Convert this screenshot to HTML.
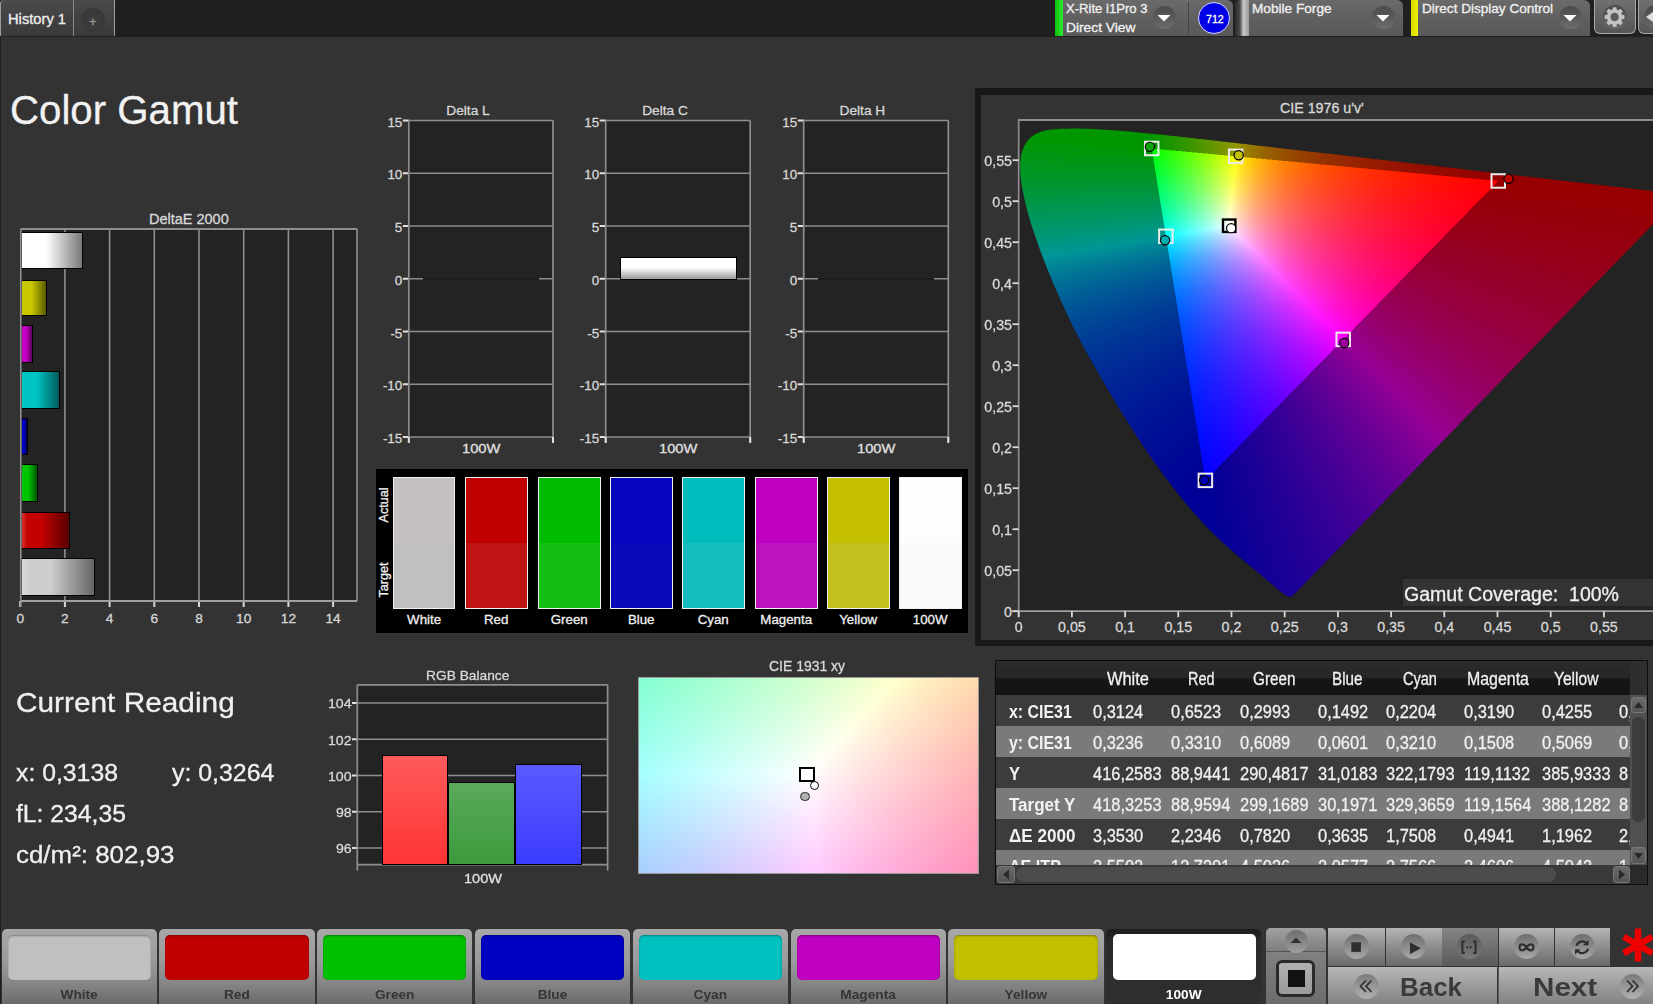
<!DOCTYPE html><html><head><meta charset="utf-8"><style>
html,body{margin:0;padding:0;}
body{width:1653px;height:1004px;overflow:hidden;background:#333333;position:relative;font-family:"Liberation Sans",sans-serif;}
.a{position:absolute;box-sizing:border-box;}
.t{position:absolute;white-space:pre;transform-origin:0 0;-webkit-text-stroke:0.3px currentColor;}
svg{position:absolute;left:0;top:0;}
canvas{position:absolute;}
</style></head><body>
<div class="a" style="left:0.00px;top:0.00px;width:1653.00px;height:37.00px;background:#202020;"></div>
<div class="a" style="left:0.00px;top:0.00px;width:115.00px;height:36.00px;background:linear-gradient(#4a4a4a,#3a3a3a);border-left:1px solid #9a9a9a;border-right:1px solid #a0a0a0;border-top-left-radius:4px;"></div>
<div class="a" style="left:73.00px;top:0.00px;width:1.00px;height:36.00px;background:#8a8a8a;"></div>
<div class="t" style="left:8.00px;top:12.68px;font-size:13.97px;line-height:13.97px;color:#eeeeee;transform:scaleX(1.0526);">History 1</div>
<div class="a" style="left:81px;top:8px;width:24px;height:24px;border-radius:50%;background:radial-gradient(circle at 50% 60%,#3e3e3e,#353535);"></div>
<div class="t" style="left:89.00px;top:14.50px;font-size:13.00px;line-height:13.00px;color:#999999;">+</div>
<div class="a" style="left:1055.00px;top:0.00px;width:178.00px;height:36.00px;background:linear-gradient(#6a6a6a,#5e5e5e 60%,#595959);border-top-right-radius:6px;"></div>
<div class="a" style="left:1055.00px;top:0.00px;width:8.00px;height:36.00px;background:linear-gradient(90deg,#10c010,#30e830);"></div>
<div class="a" style="left:1188.00px;top:2.00px;width:1.00px;height:34.00px;background:#454545;"></div>
<div class="t" style="left:1066.20px;top:2.83px;font-size:12.01px;line-height:12.01px;color:#f0f0f0;transform:scaleX(1.0915);">X-Rite i1Pro 3</div>
<div class="t" style="left:1066.20px;top:22.13px;font-size:12.01px;line-height:12.01px;color:#f0f0f0;transform:scaleX(1.1484);">Direct View</div>
<div class="a" style="left:1152.7px;top:5.5px;width:23px;height:23px;border-radius:50%;background:linear-gradient(#4c4c4c,#5a5a5a 50%,#6e6e6e);"></div>
<svg style="left:1157.2px;top:14.2px" width="14" height="9"><path d="M0.5 1 L13.5 1 L7 7.6 Z" fill="#ffffff"/></svg>
<div class="a" style="left:1198px;top:1.5px;width:32px;height:32px;border-radius:50%;background:#0000e6;border:1.5px solid #d8d8ff;"></div>
<div class="t" style="left:1205.80px;top:13.91px;font-size:10.61px;line-height:10.61px;color:#ffffff;transform:scaleX(1.0052);">712</div>
<div class="a" style="left:1239.00px;top:0.00px;width:164.00px;height:36.00px;background:linear-gradient(#6a6a6a,#5e5e5e 60%,#595959);border-top-right-radius:6px;"></div>
<div class="a" style="left:1235.00px;top:0.00px;width:14.00px;height:36.00px;background:linear-gradient(90deg,#2a2a2a,#4a4a4a 35%,#c8c8c8 60%,#9a9a9a);border-top-left-radius:5px;"></div>
<div class="t" style="left:1252.00px;top:2.60px;font-size:12.29px;line-height:12.29px;color:#f0f0f0;transform:scaleX(1.1099);">Mobile Forge</div>
<div class="a" style="left:1371.7px;top:5.5px;width:23px;height:23px;border-radius:50%;background:linear-gradient(#4c4c4c,#5a5a5a 50%,#6e6e6e);"></div>
<svg style="left:1376.2px;top:14.2px" width="14" height="9"><path d="M0.5 1 L13.5 1 L7 7.6 Z" fill="#ffffff"/></svg>
<div class="a" style="left:1411.00px;top:0.00px;width:179.00px;height:36.00px;background:linear-gradient(#6a6a6a,#5e5e5e 60%,#595959);border-top-right-radius:6px;"></div>
<div class="a" style="left:1411.00px;top:0.00px;width:7.00px;height:36.00px;background:linear-gradient(90deg,#d8d800,#f0f000);"></div>
<div class="t" style="left:1422.40px;top:2.60px;font-size:12.29px;line-height:12.29px;color:#f0f0f0;transform:scaleX(1.1040);">Direct Display Control</div>
<div class="a" style="left:1558.5px;top:5.5px;width:23px;height:23px;border-radius:50%;background:linear-gradient(#4c4c4c,#5a5a5a 50%,#6e6e6e);"></div>
<svg style="left:1563.0px;top:14.2px" width="14" height="9"><path d="M0.5 1 L13.5 1 L7 7.6 Z" fill="#ffffff"/></svg>
<div class="a" style="left:1594px;top:0px;width:42px;height:34px;border-radius:0 0 6px 6px;border:1px solid #a8a8a8;border-top:none;background:linear-gradient(#707070,#555555);"></div>
<div class="a" style="left:1603px;top:5px;width:24px;height:24px;border-radius:50%;background:linear-gradient(#4a4a4a,#6a6a6a);"></div>
<svg style="left:1594px;top:0px" width="42" height="36"><path d="M27.86 14.75 L30.46 15.31 L30.46 18.69 L27.86 19.25 L27.32 20.55 L28.77 22.77 L26.37 25.17 L24.15 23.72 L22.85 24.26 L22.29 26.86 L18.91 26.86 L18.35 24.26 L17.05 23.72 L14.83 25.17 L12.43 22.77 L13.88 20.55 L13.34 19.25 L10.74 18.69 L10.74 15.31 L13.34 14.75 L13.88 13.45 L12.43 11.23 L14.83 8.83 L17.05 10.28 L18.35 9.74 L18.91 7.14 L22.29 7.14 L22.85 9.74 L24.15 10.28 L26.37 8.83 L28.77 11.23 L27.32 13.45 Z" fill="#c4c4c4"/><circle cx="20.60" cy="17" r="4.2" fill="#5a5a5a"/></svg>
<div class="a" style="left:1638px;top:0px;width:30px;height:34px;border-radius:0 0 6px 6px;border:1px solid #a8a8a8;border-top:none;background:linear-gradient(#707070,#555555);"></div>
<div class="a" style="left:1644px;top:5px;width:24px;height:24px;border-radius:50%;background:linear-gradient(#4a4a4a,#6a6a6a);"></div>
<svg style="left:1644px;top:0px" width="9" height="36"><path d="M2 17 L9 12 L9 22 Z" fill="#e0e0e0"/></svg>
<div class="a" style="left:0.00px;top:37.00px;width:1.20px;height:967.00px;background:#1e1e1e;"></div>
<div class="t" style="left:9.50px;top:91.31px;font-size:39.80px;line-height:39.80px;color:#f2f2f2;transform:scaleX(1.0106);">Color Gamut</div>
<div class="a" style="left:20.50px;top:229.00px;width:336.50px;height:372.00px;background:#232323;"></div>
<div class="t" style="left:148.75px;top:213.18px;font-size:13.97px;line-height:13.97px;color:#d8d8d8;transform:scaleX(1.0369);">DeltaE 2000</div>
<div class="t" style="left:16.39px;top:612.41px;font-size:13.69px;line-height:13.69px;color:#d8d8d8;">0</div>
<div class="t" style="left:61.09px;top:612.41px;font-size:13.69px;line-height:13.69px;color:#d8d8d8;">2</div>
<div class="t" style="left:105.79px;top:612.41px;font-size:13.69px;line-height:13.69px;color:#d8d8d8;">4</div>
<div class="t" style="left:150.49px;top:612.41px;font-size:13.69px;line-height:13.69px;color:#d8d8d8;">6</div>
<div class="t" style="left:195.19px;top:612.41px;font-size:13.69px;line-height:13.69px;color:#d8d8d8;">8</div>
<div class="t" style="left:236.09px;top:612.41px;font-size:13.69px;line-height:13.69px;color:#d8d8d8;">10</div>
<div class="t" style="left:280.79px;top:612.41px;font-size:13.69px;line-height:13.69px;color:#d8d8d8;">12</div>
<div class="t" style="left:325.49px;top:612.41px;font-size:13.69px;line-height:13.69px;color:#d8d8d8;">14</div>
<svg width="1653" height="1004" style="left:0;top:0"><line x1="20.20" y1="601.00" x2="20.20" y2="607.00" stroke="#d8d8d8" stroke-width="2"/><line x1="64.90" y1="229.00" x2="64.90" y2="601.00" stroke="#8e8e8e" stroke-width="1.6"/><line x1="64.90" y1="601.00" x2="64.90" y2="607.00" stroke="#d8d8d8" stroke-width="2"/><line x1="109.60" y1="229.00" x2="109.60" y2="601.00" stroke="#8e8e8e" stroke-width="1.6"/><line x1="109.60" y1="601.00" x2="109.60" y2="607.00" stroke="#d8d8d8" stroke-width="2"/><line x1="154.30" y1="229.00" x2="154.30" y2="601.00" stroke="#8e8e8e" stroke-width="1.6"/><line x1="154.30" y1="601.00" x2="154.30" y2="607.00" stroke="#d8d8d8" stroke-width="2"/><line x1="199.00" y1="229.00" x2="199.00" y2="601.00" stroke="#8e8e8e" stroke-width="1.6"/><line x1="199.00" y1="601.00" x2="199.00" y2="607.00" stroke="#d8d8d8" stroke-width="2"/><line x1="243.70" y1="229.00" x2="243.70" y2="601.00" stroke="#8e8e8e" stroke-width="1.6"/><line x1="243.70" y1="601.00" x2="243.70" y2="607.00" stroke="#d8d8d8" stroke-width="2"/><line x1="288.40" y1="229.00" x2="288.40" y2="601.00" stroke="#8e8e8e" stroke-width="1.6"/><line x1="288.40" y1="601.00" x2="288.40" y2="607.00" stroke="#d8d8d8" stroke-width="2"/><line x1="333.10" y1="229.00" x2="333.10" y2="601.00" stroke="#8e8e8e" stroke-width="1.6"/><line x1="333.10" y1="601.00" x2="333.10" y2="607.00" stroke="#d8d8d8" stroke-width="2"/><line x1="357.00" y1="229.00" x2="357.00" y2="601.00" stroke="#8e8e8e" stroke-width="1.6"/><line x1="20.50" y1="229.00" x2="357.00" y2="229.00" stroke="#8e8e8e" stroke-width="2"/><line x1="20.80" y1="229.00" x2="20.80" y2="607.00" stroke="#8e8e8e" stroke-width="1.6"/><line x1="20.50" y1="601.00" x2="357.00" y2="601.00" stroke="#a0a0a0" stroke-width="1.8"/></svg>
<div class="a" style="left:21.50px;top:231.60px;width:61.00px;height:37.00px;background:linear-gradient(90deg,#ffffff,#ffffff 12%,#ffffff 40%,#7a7a7a);border:1.5px solid #000;border-left:none;"></div>
<div class="a" style="left:21.50px;top:279.50px;width:25.50px;height:36.10px;background:linear-gradient(90deg,#c8c800,#c8c800 12%,#c8c800 40%,#5a5a00);border:1.5px solid #000;border-left:none;"></div>
<div class="a" style="left:21.50px;top:325.00px;width:11.00px;height:37.60px;background:linear-gradient(90deg,#c400c4,#c400c4 12%,#c400c4 40%,#5a005a);border:1.5px solid #000;border-left:none;"></div>
<div class="a" style="left:21.50px;top:371.40px;width:38.10px;height:37.20px;background:linear-gradient(90deg,#00c4c4,#00c4c4 12%,#00c4c4 40%,#005a5a);border:1.5px solid #000;border-left:none;"></div>
<div class="a" style="left:21.50px;top:418.00px;width:6.30px;height:37.30px;background:linear-gradient(90deg,#0000c4,#0000c4 12%,#0000c4 40%,#00005a);border:1.5px solid #000;border-left:none;"></div>
<div class="a" style="left:21.50px;top:464.00px;width:16.10px;height:37.60px;background:linear-gradient(90deg,#00c400,#00c400 12%,#00c400 40%,#005a00);border:1.5px solid #000;border-left:none;"></div>
<div class="a" style="left:21.50px;top:511.60px;width:48.90px;height:37.00px;background:linear-gradient(90deg,#d83030,#c40000 12%,#c40000 40%,#5a0000);border:1.5px solid #000;border-left:none;"></div>
<div class="a" style="left:21.50px;top:558.30px;width:73.30px;height:37.30px;background:linear-gradient(90deg,#d8d8d8,#cdcdcd 12%,#cdcdcd 40%,#666666);border:1.5px solid #000;border-left:none;"></div>
<div class="a" style="left:408.80px;top:120.50px;width:144.20px;height:316.50px;background:#232323;"></div>
<div class="t" style="left:446.32px;top:104.41px;font-size:13.69px;line-height:13.69px;color:#d8d8d8;">Delta L</div>
<div class="t" style="left:387.39px;top:115.55px;font-size:13.41px;line-height:13.41px;color:#d8d8d8;">15</div>
<div class="t" style="left:387.39px;top:168.30px;font-size:13.41px;line-height:13.41px;color:#d8d8d8;">10</div>
<div class="t" style="left:394.84px;top:221.05px;font-size:13.41px;line-height:13.41px;color:#d8d8d8;">5</div>
<div class="t" style="left:394.84px;top:273.80px;font-size:13.41px;line-height:13.41px;color:#d8d8d8;">0</div>
<div class="t" style="left:390.38px;top:326.55px;font-size:13.41px;line-height:13.41px;color:#d8d8d8;">-5</div>
<div class="t" style="left:382.92px;top:379.30px;font-size:13.41px;line-height:13.41px;color:#d8d8d8;">-10</div>
<div class="t" style="left:382.92px;top:432.05px;font-size:13.41px;line-height:13.41px;color:#d8d8d8;">-15</div>
<svg width="1653" height="1004" style="left:0;top:0"><line x1="408.80" y1="120.50" x2="553.00" y2="120.50" stroke="#8e8e8e" stroke-width="1.7"/><line x1="402.80" y1="120.50" x2="408.80" y2="120.50" stroke="#e0e0e0" stroke-width="2"/><line x1="408.80" y1="173.25" x2="553.00" y2="173.25" stroke="#8e8e8e" stroke-width="1.7"/><line x1="402.80" y1="173.25" x2="408.80" y2="173.25" stroke="#e0e0e0" stroke-width="2"/><line x1="408.80" y1="226.00" x2="553.00" y2="226.00" stroke="#8e8e8e" stroke-width="1.7"/><line x1="402.80" y1="226.00" x2="408.80" y2="226.00" stroke="#e0e0e0" stroke-width="2"/><line x1="408.80" y1="278.75" x2="553.00" y2="278.75" stroke="#8e8e8e" stroke-width="1.7"/><line x1="402.80" y1="278.75" x2="408.80" y2="278.75" stroke="#e0e0e0" stroke-width="2"/><line x1="408.80" y1="331.50" x2="553.00" y2="331.50" stroke="#8e8e8e" stroke-width="1.7"/><line x1="402.80" y1="331.50" x2="408.80" y2="331.50" stroke="#e0e0e0" stroke-width="2"/><line x1="408.80" y1="384.25" x2="553.00" y2="384.25" stroke="#8e8e8e" stroke-width="1.7"/><line x1="402.80" y1="384.25" x2="408.80" y2="384.25" stroke="#e0e0e0" stroke-width="2"/><line x1="408.80" y1="437.00" x2="553.00" y2="437.00" stroke="#8e8e8e" stroke-width="1.7"/><line x1="402.80" y1="437.00" x2="408.80" y2="437.00" stroke="#e0e0e0" stroke-width="2"/><line x1="408.80" y1="120.50" x2="408.80" y2="443.00" stroke="#8e8e8e" stroke-width="1.7"/><line x1="553.00" y1="120.50" x2="553.00" y2="443.00" stroke="#8e8e8e" stroke-width="1.7"/><line x1="553.00" y1="437.00" x2="553.00" y2="443.00" stroke="#e0e0e0" stroke-width="2"/><line x1="408.80" y1="437.00" x2="408.80" y2="443.00" stroke="#e0e0e0" stroke-width="2"/></svg>
<div class="t" style="left:461.70px;top:442.37px;font-size:13.27px;line-height:13.27px;color:#e0e0e0;transform:scaleX(1.1079);">100W</div>
<div class="a" style="left:422.80px;top:278.00px;width:116.20px;height:2.00px;background:#1c1c1c;"></div>
<div class="a" style="left:605.70px;top:120.50px;width:144.50px;height:316.50px;background:#232323;"></div>
<div class="t" style="left:642.18px;top:104.41px;font-size:13.69px;line-height:13.69px;color:#d8d8d8;">Delta C</div>
<div class="t" style="left:584.29px;top:115.55px;font-size:13.41px;line-height:13.41px;color:#d8d8d8;">15</div>
<div class="t" style="left:584.29px;top:168.30px;font-size:13.41px;line-height:13.41px;color:#d8d8d8;">10</div>
<div class="t" style="left:591.74px;top:221.05px;font-size:13.41px;line-height:13.41px;color:#d8d8d8;">5</div>
<div class="t" style="left:591.74px;top:273.80px;font-size:13.41px;line-height:13.41px;color:#d8d8d8;">0</div>
<div class="t" style="left:587.28px;top:326.55px;font-size:13.41px;line-height:13.41px;color:#d8d8d8;">-5</div>
<div class="t" style="left:579.82px;top:379.30px;font-size:13.41px;line-height:13.41px;color:#d8d8d8;">-10</div>
<div class="t" style="left:579.82px;top:432.05px;font-size:13.41px;line-height:13.41px;color:#d8d8d8;">-15</div>
<svg width="1653" height="1004" style="left:0;top:0"><line x1="605.70" y1="120.50" x2="750.20" y2="120.50" stroke="#8e8e8e" stroke-width="1.7"/><line x1="599.70" y1="120.50" x2="605.70" y2="120.50" stroke="#e0e0e0" stroke-width="2"/><line x1="605.70" y1="173.25" x2="750.20" y2="173.25" stroke="#8e8e8e" stroke-width="1.7"/><line x1="599.70" y1="173.25" x2="605.70" y2="173.25" stroke="#e0e0e0" stroke-width="2"/><line x1="605.70" y1="226.00" x2="750.20" y2="226.00" stroke="#8e8e8e" stroke-width="1.7"/><line x1="599.70" y1="226.00" x2="605.70" y2="226.00" stroke="#e0e0e0" stroke-width="2"/><line x1="605.70" y1="278.75" x2="750.20" y2="278.75" stroke="#8e8e8e" stroke-width="1.7"/><line x1="599.70" y1="278.75" x2="605.70" y2="278.75" stroke="#e0e0e0" stroke-width="2"/><line x1="605.70" y1="331.50" x2="750.20" y2="331.50" stroke="#8e8e8e" stroke-width="1.7"/><line x1="599.70" y1="331.50" x2="605.70" y2="331.50" stroke="#e0e0e0" stroke-width="2"/><line x1="605.70" y1="384.25" x2="750.20" y2="384.25" stroke="#8e8e8e" stroke-width="1.7"/><line x1="599.70" y1="384.25" x2="605.70" y2="384.25" stroke="#e0e0e0" stroke-width="2"/><line x1="605.70" y1="437.00" x2="750.20" y2="437.00" stroke="#8e8e8e" stroke-width="1.7"/><line x1="599.70" y1="437.00" x2="605.70" y2="437.00" stroke="#e0e0e0" stroke-width="2"/><line x1="605.70" y1="120.50" x2="605.70" y2="443.00" stroke="#8e8e8e" stroke-width="1.7"/><line x1="750.20" y1="120.50" x2="750.20" y2="443.00" stroke="#8e8e8e" stroke-width="1.7"/><line x1="750.20" y1="437.00" x2="750.20" y2="443.00" stroke="#e0e0e0" stroke-width="2"/><line x1="605.70" y1="437.00" x2="605.70" y2="443.00" stroke="#e0e0e0" stroke-width="2"/></svg>
<div class="t" style="left:658.75px;top:442.37px;font-size:13.27px;line-height:13.27px;color:#e0e0e0;transform:scaleX(1.1079);">100W</div>
<div class="a" style="left:619.50px;top:256.50px;width:117.00px;height:23.70px;background:linear-gradient(#ffffff,#ffffff 45%,#9a9a9a);border:1.8px solid #000;"></div>
<div class="a" style="left:803.70px;top:120.50px;width:144.60px;height:316.50px;background:#232323;"></div>
<div class="t" style="left:839.58px;top:104.41px;font-size:13.69px;line-height:13.69px;color:#d8d8d8;">Delta H</div>
<div class="t" style="left:782.29px;top:115.55px;font-size:13.41px;line-height:13.41px;color:#d8d8d8;">15</div>
<div class="t" style="left:782.29px;top:168.30px;font-size:13.41px;line-height:13.41px;color:#d8d8d8;">10</div>
<div class="t" style="left:789.74px;top:221.05px;font-size:13.41px;line-height:13.41px;color:#d8d8d8;">5</div>
<div class="t" style="left:789.74px;top:273.80px;font-size:13.41px;line-height:13.41px;color:#d8d8d8;">0</div>
<div class="t" style="left:785.28px;top:326.55px;font-size:13.41px;line-height:13.41px;color:#d8d8d8;">-5</div>
<div class="t" style="left:777.82px;top:379.30px;font-size:13.41px;line-height:13.41px;color:#d8d8d8;">-10</div>
<div class="t" style="left:777.82px;top:432.05px;font-size:13.41px;line-height:13.41px;color:#d8d8d8;">-15</div>
<svg width="1653" height="1004" style="left:0;top:0"><line x1="803.70" y1="120.50" x2="948.30" y2="120.50" stroke="#8e8e8e" stroke-width="1.7"/><line x1="797.70" y1="120.50" x2="803.70" y2="120.50" stroke="#e0e0e0" stroke-width="2"/><line x1="803.70" y1="173.25" x2="948.30" y2="173.25" stroke="#8e8e8e" stroke-width="1.7"/><line x1="797.70" y1="173.25" x2="803.70" y2="173.25" stroke="#e0e0e0" stroke-width="2"/><line x1="803.70" y1="226.00" x2="948.30" y2="226.00" stroke="#8e8e8e" stroke-width="1.7"/><line x1="797.70" y1="226.00" x2="803.70" y2="226.00" stroke="#e0e0e0" stroke-width="2"/><line x1="803.70" y1="278.75" x2="948.30" y2="278.75" stroke="#8e8e8e" stroke-width="1.7"/><line x1="797.70" y1="278.75" x2="803.70" y2="278.75" stroke="#e0e0e0" stroke-width="2"/><line x1="803.70" y1="331.50" x2="948.30" y2="331.50" stroke="#8e8e8e" stroke-width="1.7"/><line x1="797.70" y1="331.50" x2="803.70" y2="331.50" stroke="#e0e0e0" stroke-width="2"/><line x1="803.70" y1="384.25" x2="948.30" y2="384.25" stroke="#8e8e8e" stroke-width="1.7"/><line x1="797.70" y1="384.25" x2="803.70" y2="384.25" stroke="#e0e0e0" stroke-width="2"/><line x1="803.70" y1="437.00" x2="948.30" y2="437.00" stroke="#8e8e8e" stroke-width="1.7"/><line x1="797.70" y1="437.00" x2="803.70" y2="437.00" stroke="#e0e0e0" stroke-width="2"/><line x1="803.70" y1="120.50" x2="803.70" y2="443.00" stroke="#8e8e8e" stroke-width="1.7"/><line x1="948.30" y1="120.50" x2="948.30" y2="443.00" stroke="#8e8e8e" stroke-width="1.7"/><line x1="948.30" y1="437.00" x2="948.30" y2="443.00" stroke="#e0e0e0" stroke-width="2"/><line x1="803.70" y1="437.00" x2="803.70" y2="443.00" stroke="#e0e0e0" stroke-width="2"/></svg>
<div class="t" style="left:856.80px;top:442.37px;font-size:13.27px;line-height:13.27px;color:#e0e0e0;transform:scaleX(1.1079);">100W</div>
<div class="a" style="left:817.70px;top:278.00px;width:116.60px;height:2.00px;background:#1c1c1c;"></div>
<div class="a" style="left:376.00px;top:469.00px;width:592.00px;height:163.50px;background:#000;"></div>
<div class="a" style="left:392.90px;top:477.30px;width:62.50px;height:132.00px;background:linear-gradient(#c3bfc3 50%,#c0c0c0 50%);border:1.5px solid #f0f0f0;"></div>
<div class="t" style="left:407.10px;top:612.94px;font-size:13.30px;line-height:13.30px;color:#f0f0f0;">White</div>
<div class="a" style="left:465.00px;top:477.30px;width:62.50px;height:132.00px;background:linear-gradient(#c00000 50%,#be1414 50%);border:1.5px solid #f0f0f0;"></div>
<div class="t" style="left:484.00px;top:612.94px;font-size:13.30px;line-height:13.30px;color:#f0f0f0;">Red</div>
<div class="a" style="left:538.00px;top:477.30px;width:62.50px;height:132.00px;background:linear-gradient(#00bc00 50%,#14be14 50%);border:1.5px solid #f0f0f0;"></div>
<div class="t" style="left:550.72px;top:612.94px;font-size:13.30px;line-height:13.30px;color:#f0f0f0;">Green</div>
<div class="a" style="left:610.00px;top:477.30px;width:62.50px;height:132.00px;background:linear-gradient(#0505bd 50%,#0a0aba 50%);border:1.5px solid #f0f0f0;"></div>
<div class="t" style="left:627.89px;top:612.94px;font-size:13.30px;line-height:13.30px;color:#f0f0f0;">Blue</div>
<div class="a" style="left:682.00px;top:477.30px;width:62.50px;height:132.00px;background:linear-gradient(#00bcbc 50%,#14bebe 50%);border:1.5px solid #f0f0f0;"></div>
<div class="t" style="left:697.68px;top:612.94px;font-size:13.30px;line-height:13.30px;color:#f0f0f0;">Cyan</div>
<div class="a" style="left:755.00px;top:477.30px;width:62.50px;height:132.00px;background:linear-gradient(#c000c0 50%,#bd12bd 50%);border:1.5px solid #f0f0f0;"></div>
<div class="t" style="left:760.32px;top:612.94px;font-size:13.30px;line-height:13.30px;color:#f0f0f0;">Magenta</div>
<div class="a" style="left:827.00px;top:477.30px;width:62.50px;height:132.00px;background:linear-gradient(#c4c000 50%,#c4c020 50%);border:1.5px solid #f0f0f0;"></div>
<div class="t" style="left:839.22px;top:612.94px;font-size:13.30px;line-height:13.30px;color:#f0f0f0;">Yellow</div>
<div class="a" style="left:899.00px;top:477.30px;width:62.50px;height:132.00px;background:linear-gradient(#fffcff 50%,#fafafa 50%);border:1.5px solid #f0f0f0;"></div>
<div class="t" style="left:912.83px;top:612.94px;font-size:13.30px;line-height:13.30px;color:#f0f0f0;">100W</div>
<div class="t" style="left:366px;top:498px;width:36px;font-size:12.6px;line-height:14px;color:#f0f0f0;transform:rotate(-90deg);transform-origin:50% 50%;text-align:center;">Actual</div>
<div class="t" style="left:366px;top:573px;width:36px;font-size:12.6px;line-height:14px;color:#f0f0f0;transform:rotate(-90deg);transform-origin:50% 50%;text-align:center;">Target</div>
<div class="a" style="left:974.50px;top:88.00px;width:678.50px;height:558.00px;background:#181818;"></div>
<div class="a" style="left:981.00px;top:95.00px;width:672.00px;height:545.00px;background:#333333;"></div>
<div class="t" style="left:1279.80px;top:102.20px;font-size:13.83px;line-height:13.83px;color:#d8d8d8;transform:scaleX(1.0299);">CIE 1976 u'v'</div>
<div class="a" style="left:1018.00px;top:119.00px;width:635.00px;height:492.00px;background:#232323;"></div>
<svg id="fb76" width="1653" height="1004" style="left:0;top:0"><defs><linearGradient id="fg1" x1="1050" y1="150" x2="1250" y2="590" gradientUnits="userSpaceOnUse"><stop offset="0" stop-color="#009600"/><stop offset="0.45" stop-color="#008a80"/><stop offset="1" stop-color="#00009a"/></linearGradient><linearGradient id="fg2" x1="1250" y1="500" x2="1650" y2="200" gradientUnits="userSpaceOnUse"><stop offset="0" stop-color="#2a00a0" stop-opacity="0"/><stop offset="0.35" stop-color="#8a0090"/><stop offset="1" stop-color="#9a0000"/></linearGradient><linearGradient id="gR" x1="1498.2" y1="182.4" x2="1165.7" y2="236.2" gradientUnits="userSpaceOnUse"><stop offset="0" stop-color="#ff0000"/><stop offset="0.62" stop-color="#ff0000"/><stop offset="1" stop-color="#000"/></linearGradient><linearGradient id="gG" x1="1151.7" y1="150.0" x2="1345.0" y2="339.1" gradientUnits="userSpaceOnUse"><stop offset="0" stop-color="#00ff00"/><stop offset="0.62" stop-color="#00ff00"/><stop offset="1" stop-color="#000"/></linearGradient><linearGradient id="gB" x1="1205.4" y1="481.7" x2="1235.7" y2="157.8" gradientUnits="userSpaceOnUse"><stop offset="0" stop-color="#0000ff"/><stop offset="0.62" stop-color="#0000ff"/><stop offset="1" stop-color="#000"/></linearGradient></defs><polygon points="1292.0,597.7 1290.8,598.1 1287.1,597.4 1268.5,582.6 1248.7,566.1 1218.4,539.8 1172.0,487.4 1140.7,443.6 1106.8,389.1 1074.2,330.2 1048.7,273.6 1031.3,225.9 1022.4,190.5 1020.2,165.8 1023.6,148.9 1031.8,138.1 1043.3,132.6 1057.0,130.6 1072.0,130.1 1103.0,131.0 1138.6,133.9 1181.6,138.4 1234.2,144.3 1297.8,151.6 1371.4,160.1 1448.0,168.9 1517.8,177.0 1572.2,183.2 1639.0,190.9 1682.0,195.9" fill="url(#fg1)"/><polygon points="1292.0,597.7 1290.8,598.1 1287.1,597.4 1268.5,582.6 1248.7,566.1 1218.4,539.8 1172.0,487.4 1140.7,443.6 1106.8,389.1 1074.2,330.2 1048.7,273.6 1031.3,225.9 1022.4,190.5 1020.2,165.8 1023.6,148.9 1031.8,138.1 1043.3,132.6 1057.0,130.6 1072.0,130.1 1103.0,131.0 1138.6,133.9 1181.6,138.4 1234.2,144.3 1297.8,151.6 1371.4,160.1 1448.0,168.9 1517.8,177.0 1572.2,183.2 1639.0,190.9 1682.0,195.9" fill="url(#fg2)"/><g style="isolation:isolate"><polygon points="1498.2,182.4 1151.7,150.0 1205.4,481.7" fill="#000"/><polygon points="1498.2,182.4 1151.7,150.0 1205.4,481.7" fill="url(#gR)" style="mix-blend-mode:screen"/><polygon points="1498.2,182.4 1151.7,150.0 1205.4,481.7" fill="url(#gG)" style="mix-blend-mode:screen"/><polygon points="1498.2,182.4 1151.7,150.0 1205.4,481.7" fill="url(#gB)" style="mix-blend-mode:screen"/></g></svg>
<canvas id="c76" width="635" height="492" style="left:1018px;top:119px;width:635px;height:492px"></canvas>
<div class="t" style="left:1004.08px;top:605.04px;font-size:14.25px;line-height:14.25px;color:#d8d8d8;">0</div>
<div class="t" style="left:984.28px;top:564.04px;font-size:14.25px;line-height:14.25px;color:#d8d8d8;">0,05</div>
<div class="t" style="left:992.20px;top:523.04px;font-size:14.25px;line-height:14.25px;color:#d8d8d8;">0,1</div>
<div class="t" style="left:984.28px;top:482.04px;font-size:14.25px;line-height:14.25px;color:#d8d8d8;">0,15</div>
<div class="t" style="left:992.20px;top:441.04px;font-size:14.25px;line-height:14.25px;color:#d8d8d8;">0,2</div>
<div class="t" style="left:984.28px;top:400.04px;font-size:14.25px;line-height:14.25px;color:#d8d8d8;">0,25</div>
<div class="t" style="left:992.20px;top:359.04px;font-size:14.25px;line-height:14.25px;color:#d8d8d8;">0,3</div>
<div class="t" style="left:984.28px;top:318.04px;font-size:14.25px;line-height:14.25px;color:#d8d8d8;">0,35</div>
<div class="t" style="left:992.20px;top:277.04px;font-size:14.25px;line-height:14.25px;color:#d8d8d8;">0,4</div>
<div class="t" style="left:984.28px;top:236.04px;font-size:14.25px;line-height:14.25px;color:#d8d8d8;">0,45</div>
<div class="t" style="left:992.20px;top:195.04px;font-size:14.25px;line-height:14.25px;color:#d8d8d8;">0,5</div>
<div class="t" style="left:984.28px;top:154.04px;font-size:14.25px;line-height:14.25px;color:#d8d8d8;">0,55</div>
<div class="t" style="left:1014.74px;top:620.44px;font-size:14.25px;line-height:14.25px;color:#d8d8d8;">0</div>
<div class="t" style="left:1058.04px;top:620.44px;font-size:14.25px;line-height:14.25px;color:#d8d8d8;">0,05</div>
<div class="t" style="left:1115.20px;top:620.44px;font-size:14.25px;line-height:14.25px;color:#d8d8d8;">0,1</div>
<div class="t" style="left:1164.44px;top:620.44px;font-size:14.25px;line-height:14.25px;color:#d8d8d8;">0,15</div>
<div class="t" style="left:1221.60px;top:620.44px;font-size:14.25px;line-height:14.25px;color:#d8d8d8;">0,2</div>
<div class="t" style="left:1270.84px;top:620.44px;font-size:14.25px;line-height:14.25px;color:#d8d8d8;">0,25</div>
<div class="t" style="left:1328.00px;top:620.44px;font-size:14.25px;line-height:14.25px;color:#d8d8d8;">0,3</div>
<div class="t" style="left:1377.24px;top:620.44px;font-size:14.25px;line-height:14.25px;color:#d8d8d8;">0,35</div>
<div class="t" style="left:1434.40px;top:620.44px;font-size:14.25px;line-height:14.25px;color:#d8d8d8;">0,4</div>
<div class="t" style="left:1483.64px;top:620.44px;font-size:14.25px;line-height:14.25px;color:#d8d8d8;">0,45</div>
<div class="t" style="left:1540.80px;top:620.44px;font-size:14.25px;line-height:14.25px;color:#d8d8d8;">0,5</div>
<div class="t" style="left:1590.04px;top:620.44px;font-size:14.25px;line-height:14.25px;color:#d8d8d8;">0,55</div>
<svg width="1653" height="1004" style="left:0;top:0"><line x1="1018.00" y1="120.00" x2="1653.00" y2="120.00" stroke="#8e8e8e" stroke-width="2"/><line x1="1018.70" y1="119.00" x2="1018.70" y2="617.00" stroke="#8e8e8e" stroke-width="1.7"/><line x1="1012.00" y1="611.20" x2="1653.00" y2="611.20" stroke="#a0a0a0" stroke-width="1.7"/><line x1="1012.50" y1="611.20" x2="1018.70" y2="611.20" stroke="#d8d8d8" stroke-width="1.8"/><line x1="1012.50" y1="570.20" x2="1018.70" y2="570.20" stroke="#d8d8d8" stroke-width="1.8"/><line x1="1012.50" y1="529.20" x2="1018.70" y2="529.20" stroke="#d8d8d8" stroke-width="1.8"/><line x1="1012.50" y1="488.20" x2="1018.70" y2="488.20" stroke="#d8d8d8" stroke-width="1.8"/><line x1="1012.50" y1="447.20" x2="1018.70" y2="447.20" stroke="#d8d8d8" stroke-width="1.8"/><line x1="1012.50" y1="406.20" x2="1018.70" y2="406.20" stroke="#d8d8d8" stroke-width="1.8"/><line x1="1012.50" y1="365.20" x2="1018.70" y2="365.20" stroke="#d8d8d8" stroke-width="1.8"/><line x1="1012.50" y1="324.20" x2="1018.70" y2="324.20" stroke="#d8d8d8" stroke-width="1.8"/><line x1="1012.50" y1="283.20" x2="1018.70" y2="283.20" stroke="#d8d8d8" stroke-width="1.8"/><line x1="1012.50" y1="242.20" x2="1018.70" y2="242.20" stroke="#d8d8d8" stroke-width="1.8"/><line x1="1012.50" y1="201.20" x2="1018.70" y2="201.20" stroke="#d8d8d8" stroke-width="1.8"/><line x1="1012.50" y1="160.20" x2="1018.70" y2="160.20" stroke="#d8d8d8" stroke-width="1.8"/><line x1="1018.70" y1="611.20" x2="1018.70" y2="617.20" stroke="#d8d8d8" stroke-width="1.8"/><line x1="1071.90" y1="611.20" x2="1071.90" y2="617.20" stroke="#d8d8d8" stroke-width="1.8"/><line x1="1125.10" y1="611.20" x2="1125.10" y2="617.20" stroke="#d8d8d8" stroke-width="1.8"/><line x1="1178.30" y1="611.20" x2="1178.30" y2="617.20" stroke="#d8d8d8" stroke-width="1.8"/><line x1="1231.50" y1="611.20" x2="1231.50" y2="617.20" stroke="#d8d8d8" stroke-width="1.8"/><line x1="1284.70" y1="611.20" x2="1284.70" y2="617.20" stroke="#d8d8d8" stroke-width="1.8"/><line x1="1337.90" y1="611.20" x2="1337.90" y2="617.20" stroke="#d8d8d8" stroke-width="1.8"/><line x1="1391.10" y1="611.20" x2="1391.10" y2="617.20" stroke="#d8d8d8" stroke-width="1.8"/><line x1="1444.30" y1="611.20" x2="1444.30" y2="617.20" stroke="#d8d8d8" stroke-width="1.8"/><line x1="1497.50" y1="611.20" x2="1497.50" y2="617.20" stroke="#d8d8d8" stroke-width="1.8"/><line x1="1550.70" y1="611.20" x2="1550.70" y2="617.20" stroke="#d8d8d8" stroke-width="1.8"/><line x1="1603.90" y1="611.20" x2="1603.90" y2="617.20" stroke="#d8d8d8" stroke-width="1.8"/><rect x="1144.95" y="141.73" width="13.5" height="13.5" fill="none" stroke="#ececec" stroke-width="2"/><rect x="1228.92" y="149.60" width="13.5" height="13.5" fill="none" stroke="#ececec" stroke-width="2"/><rect x="1159.12" y="229.54" width="13.5" height="13.5" fill="none" stroke="#ececec" stroke-width="2"/><rect x="1336.46" y="332.65" width="13.5" height="13.5" fill="none" stroke="#ececec" stroke-width="2"/><rect x="1198.62" y="473.63" width="13.5" height="13.5" fill="none" stroke="#ececec" stroke-width="2"/><rect x="1491.50" y="174.23" width="13.5" height="13.5" fill="none" stroke="#ececec" stroke-width="2"/><circle cx="1149.91" cy="146.86" r="4.6" fill="#10a010" stroke="#000" stroke-width="1.2"/><circle cx="1238.69" cy="155.29" r="4.6" fill="#c0c000" stroke="#000" stroke-width="1.2"/><circle cx="1165.01" cy="240.26" r="4.6" fill="#00b0b0" stroke="#000" stroke-width="1.2"/><circle cx="1344.15" cy="343.02" r="4.6" fill="#a000a0" stroke="#000" stroke-width="1.2"/><circle cx="1204.22" cy="480.27" r="4.6" fill="#0000b0" stroke="#000" stroke-width="1.2"/><circle cx="1508.55" cy="178.72" r="4.6" fill="#c00000" stroke="#000" stroke-width="1.2"/><rect x="1222.99" y="219.54" width="12.4" height="12.4" fill="none" stroke="#000" stroke-width="2.4"/><circle cx="1231.15" cy="228.17" r="4.6" fill="#ffffff" stroke="#000" stroke-width="1.2"/></svg>
<div class="a" style="left:1403.00px;top:579.00px;width:250.00px;height:27.00px;background:#333333;"></div>
<div class="t" style="left:1404.00px;top:584.38px;font-size:20.11px;line-height:20.11px;color:#f0f0f0;transform:scaleX(0.9714);">Gamut Coverage:  100%</div>
<div class="t" style="left:15.50px;top:689.35px;font-size:27.93px;line-height:27.93px;color:#f0f0f0;transform:scaleX(1.0676);">Current Reading</div>
<div class="t" style="left:15.50px;top:761.90px;font-size:23.74px;line-height:23.74px;color:#f0f0f0;transform:scaleX(1.0443);">x: 0,3138</div>
<div class="t" style="left:172.00px;top:761.90px;font-size:23.74px;line-height:23.74px;color:#f0f0f0;transform:scaleX(1.0484);">y: 0,3264</div>
<div class="t" style="left:15.50px;top:803.40px;font-size:23.74px;line-height:23.74px;color:#f0f0f0;transform:scaleX(1.0416);">fL: 234,35</div>
<div class="t" style="left:15.50px;top:843.50px;font-size:23.74px;line-height:23.74px;color:#f0f0f0;transform:scaleX(1.0919);">cd/m²: 802,93</div>
<div class="a" style="left:357.30px;top:684.90px;width:250.30px;height:179.80px;background:#232323;"></div>
<div class="t" style="left:425.80px;top:668.85px;font-size:13.41px;line-height:13.41px;color:#d8d8d8;transform:scaleX(1.0267);">RGB Balance</div>
<div class="t" style="left:327.90px;top:697.41px;font-size:13.69px;line-height:13.69px;color:#d8d8d8;transform:scaleX(1.0335);">104</div>
<div class="t" style="left:327.90px;top:733.66px;font-size:13.69px;line-height:13.69px;color:#d8d8d8;transform:scaleX(1.0335);">102</div>
<div class="t" style="left:327.90px;top:769.91px;font-size:13.69px;line-height:13.69px;color:#d8d8d8;transform:scaleX(1.0335);">100</div>
<div class="t" style="left:335.80px;top:806.16px;font-size:13.69px;line-height:13.69px;color:#d8d8d8;transform:scaleX(1.0314);">98</div>
<div class="t" style="left:335.80px;top:842.41px;font-size:13.69px;line-height:13.69px;color:#d8d8d8;transform:scaleX(1.0314);">96</div>
<svg width="1653" height="1004" style="left:0;top:0"><line x1="357.30" y1="703.00" x2="607.60" y2="703.00" stroke="#8e8e8e" stroke-width="1.7"/><line x1="352.00" y1="703.00" x2="357.30" y2="703.00" stroke="#e0e0e0" stroke-width="2"/><line x1="357.30" y1="739.25" x2="607.60" y2="739.25" stroke="#8e8e8e" stroke-width="1.7"/><line x1="352.00" y1="739.25" x2="357.30" y2="739.25" stroke="#e0e0e0" stroke-width="2"/><line x1="357.30" y1="775.50" x2="607.60" y2="775.50" stroke="#8e8e8e" stroke-width="1.7"/><line x1="352.00" y1="775.50" x2="357.30" y2="775.50" stroke="#e0e0e0" stroke-width="2"/><line x1="357.30" y1="811.75" x2="607.60" y2="811.75" stroke="#8e8e8e" stroke-width="1.7"/><line x1="352.00" y1="811.75" x2="357.30" y2="811.75" stroke="#e0e0e0" stroke-width="2"/><line x1="357.30" y1="848.00" x2="607.60" y2="848.00" stroke="#8e8e8e" stroke-width="1.7"/><line x1="352.00" y1="848.00" x2="357.30" y2="848.00" stroke="#e0e0e0" stroke-width="2"/><line x1="357.30" y1="684.90" x2="607.60" y2="684.90" stroke="#8e8e8e" stroke-width="1.8"/><line x1="357.30" y1="684.90" x2="357.30" y2="870.70" stroke="#8e8e8e" stroke-width="1.7"/><line x1="607.60" y1="684.90" x2="607.60" y2="870.70" stroke="#8e8e8e" stroke-width="1.7"/><line x1="357.30" y1="864.70" x2="607.60" y2="864.70" stroke="#8e8e8e" stroke-width="1.7"/></svg>
<div class="a" style="left:381.50px;top:754.50px;width:66.50px;height:110.70px;background:linear-gradient(#ff5a5a,#ff3434);border:1.6px solid #000;"></div>
<div class="a" style="left:447.50px;top:781.80px;width:67.00px;height:83.40px;background:linear-gradient(#5aaa5a,#3c9a3c);border:1.6px solid #000;"></div>
<div class="a" style="left:515.00px;top:763.50px;width:66.50px;height:101.70px;background:linear-gradient(#5a5aff,#3c3cff);border:1.6px solid #000;"></div>
<div class="t" style="left:463.60px;top:871.51px;font-size:13.69px;line-height:13.69px;color:#e0e0e0;transform:scaleX(1.0628);">100W</div>
<div class="t" style="left:769.00px;top:660.38px;font-size:13.97px;line-height:13.97px;color:#d8d8d8;">CIE 1931 xy</div>
<div class="a" style="left:637.50px;top:676.50px;width:341.00px;height:197.00px;background:#9a9a9a;"></div>
<div class="a" style="left:638.50px;top:677.50px;width:339.00px;height:195.00px;background:radial-gradient(ellipse 45% 45% at 50% 50%,#ffffff,rgba(255,255,255,0)),linear-gradient(135deg,rgba(120,255,210,1),rgba(200,255,220,0.6) 30%,rgba(255,255,255,0) 50%,rgba(255,180,210,0.7) 75%,#ff99bb),linear-gradient(45deg,#aaccff,#ffffff 50%,#ffe0a0);"></div>
<canvas id="c31" width="339" height="195" style="left:638.5px;top:677.5px;width:339px;height:195px"></canvas>
<div class="a" style="left:799.30px;top:767.00px;width:15.70px;height:14.50px;background:#fff;border:2.5px solid #000;"></div>
<div class="a" style="left:809.5px;top:780.5px;width:9.5px;height:9.5px;border-radius:50%;background:#fff;border:1.2px solid #000;"></div>
<div class="a" style="left:800px;top:791.5px;width:9.5px;height:9.5px;border-radius:50%;background:#b0b0b0;border:1.2px solid #222;"></div>
<div class="a" style="left:995.00px;top:660.00px;width:653.00px;height:225.00px;background:#0c0c0c;"></div>
<div class="a" style="left:996.00px;top:661.00px;width:634.00px;height:34.00px;background:linear-gradient(#2c2c2c,#262626 50%,#171717 52%,#121212);"></div>
<div class="t" style="left:1107.00px;top:671.12px;font-size:17.46px;line-height:17.46px;color:#f0f0f0;transform:scaleX(0.9412);">White</div>
<div class="t" style="left:1187.75px;top:671.12px;font-size:17.46px;line-height:17.46px;color:#f0f0f0;transform:scaleX(0.8275);">Red</div>
<div class="t" style="left:1252.75px;top:671.12px;font-size:17.46px;line-height:17.46px;color:#f0f0f0;transform:scaleX(0.8760);">Green</div>
<div class="t" style="left:1332.15px;top:671.12px;font-size:17.46px;line-height:17.46px;color:#f0f0f0;transform:scaleX(0.8729);">Blue</div>
<div class="t" style="left:1403.40px;top:671.12px;font-size:17.46px;line-height:17.46px;color:#f0f0f0;transform:scaleX(0.8343);">Cyan</div>
<div class="t" style="left:1467.00px;top:671.12px;font-size:17.46px;line-height:17.46px;color:#f0f0f0;transform:scaleX(0.9127);">Magenta</div>
<div class="t" style="left:1553.55px;top:671.12px;font-size:17.46px;line-height:17.46px;color:#f0f0f0;transform:scaleX(0.8931);">Yellow</div>
<div class="a" style="left:996px;top:695px;width:634px;height:170px;overflow:hidden;">
<div class="a" style="left:0.00px;top:0.00px;width:634.00px;height:31.00px;background:#3c3c3c;"></div>
<div class="t" style="left:13.40px;top:7.79px;font-size:18.85px;line-height:18.85px;font-weight:bold;-webkit-text-stroke:0;color:#f2f2f2;transform:scaleX(0.8441);">x: CIE31</div>
<div class="t" style="left:97.40px;top:8.38px;font-size:18.16px;line-height:18.16px;color:#f0f0f0;transform:scaleX(0.9050);">0,3124</div>
<div class="t" style="left:175.30px;top:8.38px;font-size:18.16px;line-height:18.16px;color:#f0f0f0;transform:scaleX(0.9050);">0,6523</div>
<div class="t" style="left:243.80px;top:8.38px;font-size:18.16px;line-height:18.16px;color:#f0f0f0;transform:scaleX(0.9050);">0,2993</div>
<div class="t" style="left:321.50px;top:8.38px;font-size:18.16px;line-height:18.16px;color:#f0f0f0;transform:scaleX(0.9050);">0,1492</div>
<div class="t" style="left:390.00px;top:8.38px;font-size:18.16px;line-height:18.16px;color:#f0f0f0;transform:scaleX(0.9050);">0,2204</div>
<div class="t" style="left:467.70px;top:8.38px;font-size:18.16px;line-height:18.16px;color:#f0f0f0;transform:scaleX(0.9050);">0,3190</div>
<div class="t" style="left:545.70px;top:8.38px;font-size:18.16px;line-height:18.16px;color:#f0f0f0;transform:scaleX(0.9050);">0,4255</div>
<div class="t" style="left:622.90px;top:8.38px;font-size:18.16px;line-height:18.16px;color:#f0f0f0;transform:scaleX(0.9050);">0,</div>
<div class="a" style="left:0.00px;top:31.00px;width:634.00px;height:31.00px;background:#7a7a7a;"></div>
<div class="t" style="left:13.40px;top:38.79px;font-size:18.85px;line-height:18.85px;font-weight:bold;-webkit-text-stroke:0;color:#f2f2f2;transform:scaleX(0.8441);">y: CIE31</div>
<div class="t" style="left:97.40px;top:39.38px;font-size:18.16px;line-height:18.16px;color:#f0f0f0;transform:scaleX(0.9050);">0,3236</div>
<div class="t" style="left:175.30px;top:39.38px;font-size:18.16px;line-height:18.16px;color:#f0f0f0;transform:scaleX(0.9050);">0,3310</div>
<div class="t" style="left:243.80px;top:39.38px;font-size:18.16px;line-height:18.16px;color:#f0f0f0;transform:scaleX(0.9050);">0,6089</div>
<div class="t" style="left:321.50px;top:39.38px;font-size:18.16px;line-height:18.16px;color:#f0f0f0;transform:scaleX(0.9050);">0,0601</div>
<div class="t" style="left:390.00px;top:39.38px;font-size:18.16px;line-height:18.16px;color:#f0f0f0;transform:scaleX(0.9050);">0,3210</div>
<div class="t" style="left:467.70px;top:39.38px;font-size:18.16px;line-height:18.16px;color:#f0f0f0;transform:scaleX(0.9050);">0,1508</div>
<div class="t" style="left:545.70px;top:39.38px;font-size:18.16px;line-height:18.16px;color:#f0f0f0;transform:scaleX(0.9050);">0,5069</div>
<div class="t" style="left:622.90px;top:39.38px;font-size:18.16px;line-height:18.16px;color:#f0f0f0;transform:scaleX(0.9050);">0,</div>
<div class="a" style="left:0.00px;top:62.00px;width:634.00px;height:31.00px;background:#3c3c3c;"></div>
<div class="t" style="left:13.40px;top:69.79px;font-size:18.85px;line-height:18.85px;font-weight:bold;-webkit-text-stroke:0;color:#f2f2f2;transform:scaleX(0.8746);">Y</div>
<div class="t" style="left:97.40px;top:70.38px;font-size:18.16px;line-height:18.16px;color:#f0f0f0;transform:scaleX(0.9050);">416,2583</div>
<div class="t" style="left:175.30px;top:70.38px;font-size:18.16px;line-height:18.16px;color:#f0f0f0;transform:scaleX(0.9050);">88,9441</div>
<div class="t" style="left:243.80px;top:70.38px;font-size:18.16px;line-height:18.16px;color:#f0f0f0;transform:scaleX(0.9050);">290,4817</div>
<div class="t" style="left:321.50px;top:70.38px;font-size:18.16px;line-height:18.16px;color:#f0f0f0;transform:scaleX(0.9050);">31,0183</div>
<div class="t" style="left:390.00px;top:70.38px;font-size:18.16px;line-height:18.16px;color:#f0f0f0;transform:scaleX(0.9050);">322,1793</div>
<div class="t" style="left:467.70px;top:70.38px;font-size:18.16px;line-height:18.16px;color:#f0f0f0;transform:scaleX(0.9050);">119,1132</div>
<div class="t" style="left:545.70px;top:70.38px;font-size:18.16px;line-height:18.16px;color:#f0f0f0;transform:scaleX(0.9050);">385,9333</div>
<div class="t" style="left:622.90px;top:70.38px;font-size:18.16px;line-height:18.16px;color:#f0f0f0;transform:scaleX(0.9050);">8</div>
<div class="a" style="left:0.00px;top:93.00px;width:634.00px;height:31.00px;background:#7a7a7a;"></div>
<div class="t" style="left:13.40px;top:100.79px;font-size:18.85px;line-height:18.85px;font-weight:bold;-webkit-text-stroke:0;color:#f2f2f2;transform:scaleX(0.9024);">Target Y</div>
<div class="t" style="left:97.40px;top:101.38px;font-size:18.16px;line-height:18.16px;color:#f0f0f0;transform:scaleX(0.9050);">418,3253</div>
<div class="t" style="left:175.30px;top:101.38px;font-size:18.16px;line-height:18.16px;color:#f0f0f0;transform:scaleX(0.9050);">88,9594</div>
<div class="t" style="left:243.80px;top:101.38px;font-size:18.16px;line-height:18.16px;color:#f0f0f0;transform:scaleX(0.9050);">299,1689</div>
<div class="t" style="left:321.50px;top:101.38px;font-size:18.16px;line-height:18.16px;color:#f0f0f0;transform:scaleX(0.9050);">30,1971</div>
<div class="t" style="left:390.00px;top:101.38px;font-size:18.16px;line-height:18.16px;color:#f0f0f0;transform:scaleX(0.9050);">329,3659</div>
<div class="t" style="left:467.70px;top:101.38px;font-size:18.16px;line-height:18.16px;color:#f0f0f0;transform:scaleX(0.9050);">119,1564</div>
<div class="t" style="left:545.70px;top:101.38px;font-size:18.16px;line-height:18.16px;color:#f0f0f0;transform:scaleX(0.9050);">388,1282</div>
<div class="t" style="left:622.90px;top:101.38px;font-size:18.16px;line-height:18.16px;color:#f0f0f0;transform:scaleX(0.9050);">8</div>
<div class="a" style="left:0.00px;top:124.00px;width:634.00px;height:31.00px;background:#3c3c3c;"></div>
<div class="t" style="left:13.40px;top:131.79px;font-size:18.85px;line-height:18.85px;font-weight:bold;-webkit-text-stroke:0;color:#f2f2f2;transform:scaleX(0.9071);">ΔE 2000</div>
<div class="t" style="left:97.40px;top:132.38px;font-size:18.16px;line-height:18.16px;color:#f0f0f0;transform:scaleX(0.9050);">3,3530</div>
<div class="t" style="left:175.30px;top:132.38px;font-size:18.16px;line-height:18.16px;color:#f0f0f0;transform:scaleX(0.9050);">2,2346</div>
<div class="t" style="left:243.80px;top:132.38px;font-size:18.16px;line-height:18.16px;color:#f0f0f0;transform:scaleX(0.9050);">0,7820</div>
<div class="t" style="left:321.50px;top:132.38px;font-size:18.16px;line-height:18.16px;color:#f0f0f0;transform:scaleX(0.9050);">0,3635</div>
<div class="t" style="left:390.00px;top:132.38px;font-size:18.16px;line-height:18.16px;color:#f0f0f0;transform:scaleX(0.9050);">1,7508</div>
<div class="t" style="left:467.70px;top:132.38px;font-size:18.16px;line-height:18.16px;color:#f0f0f0;transform:scaleX(0.9050);">0,4941</div>
<div class="t" style="left:545.70px;top:132.38px;font-size:18.16px;line-height:18.16px;color:#f0f0f0;transform:scaleX(0.9050);">1,1962</div>
<div class="t" style="left:622.90px;top:132.38px;font-size:18.16px;line-height:18.16px;color:#f0f0f0;transform:scaleX(0.9050);">2,</div>
<div class="a" style="left:0.00px;top:155.00px;width:634.00px;height:31.00px;background:#7a7a7a;"></div>
<div class="t" style="left:13.40px;top:162.79px;font-size:18.85px;line-height:18.85px;font-weight:bold;-webkit-text-stroke:0;color:#f2f2f2;transform:scaleX(0.8567);">ΔE ITP</div>
<div class="t" style="left:97.40px;top:163.38px;font-size:18.16px;line-height:18.16px;color:#f0f0f0;transform:scaleX(0.9050);">2,5502</div>
<div class="t" style="left:175.30px;top:163.38px;font-size:18.16px;line-height:18.16px;color:#f0f0f0;transform:scaleX(0.9050);">12,7301</div>
<div class="t" style="left:243.80px;top:163.38px;font-size:18.16px;line-height:18.16px;color:#f0f0f0;transform:scaleX(0.9050);">4,5036</div>
<div class="t" style="left:321.50px;top:163.38px;font-size:18.16px;line-height:18.16px;color:#f0f0f0;transform:scaleX(0.9050);">2,0577</div>
<div class="t" style="left:390.00px;top:163.38px;font-size:18.16px;line-height:18.16px;color:#f0f0f0;transform:scaleX(0.9050);">3,7566</div>
<div class="t" style="left:467.70px;top:163.38px;font-size:18.16px;line-height:18.16px;color:#f0f0f0;transform:scaleX(0.9050);">2,4606</div>
<div class="t" style="left:545.70px;top:163.38px;font-size:18.16px;line-height:18.16px;color:#f0f0f0;transform:scaleX(0.9050);">4,5042</div>
<div class="t" style="left:622.90px;top:163.38px;font-size:18.16px;line-height:18.16px;color:#f0f0f0;transform:scaleX(0.9050);">1,</div>
</div>
<div class="a" style="left:1630.00px;top:661.00px;width:17.00px;height:34.00px;background:#2e2e2e;"></div>
<div class="a" style="left:1630.00px;top:695.00px;width:17.00px;height:170.00px;background:#505050;"></div>
<div class="a" style="left:1631.00px;top:697.00px;width:15.00px;height:16.00px;background:linear-gradient(#6a6a6a,#555);border-radius:3px;border:1px solid #777;"></div>
<svg style="left:1631px;top:697px" width="15" height="16"><path d="M3 11 L7.5 5 L12 11 Z" fill="#2a2a2a"/></svg>
<div class="a" style="left:1632.00px;top:717.00px;width:13.00px;height:105.00px;background:#3c3c3c;border-radius:6px;"></div>
<div class="a" style="left:1631.00px;top:847.00px;width:15.00px;height:17.00px;background:linear-gradient(#6a6a6a,#555);border-radius:3px;border:1px solid #777;"></div>
<svg style="left:1631px;top:847px" width="15" height="17"><path d="M3 6 L12 6 L7.5 12 Z" fill="#2a2a2a"/></svg>
<div class="a" style="left:996.00px;top:865.00px;width:634.00px;height:19.00px;background:#3a3a3a;"></div>
<div class="a" style="left:997.00px;top:866.00px;width:18.00px;height:17.00px;background:linear-gradient(#6a6a6a,#555);border-radius:3px;border:1px solid #777;"></div>
<svg style="left:997px;top:866px" width="18" height="17"><path d="M12 3.5 L6 8.5 L12 13.5 Z" fill="#2a2a2a"/></svg>
<div class="a" style="left:1016.00px;top:867.00px;width:540.00px;height:15.00px;background:#4c4c4c;border-radius:8px;"></div>
<div class="a" style="left:1613.00px;top:866.00px;width:17.00px;height:17.00px;background:linear-gradient(#6a6a6a,#555);border-radius:3px;border:1px solid #777;"></div>
<svg style="left:1613px;top:866px" width="17" height="17"><path d="M6 3.5 L12 8.5 L6 13.5 Z" fill="#2a2a2a"/></svg>
<div class="a" style="left:1630.00px;top:865.00px;width:17.00px;height:19.00px;background:#2a2a2a;"></div>
<div class="a" style="left:1.50px;top:928.80px;width:155.30px;height:81.20px;background:linear-gradient(#a8a8a8,#9a9a9a 40%,#858585 68%,#626262);border-radius:5px;"></div>
<div class="a" style="left:7.50px;top:934.50px;width:143.30px;height:45.80px;background:#c0c0c0;border-radius:5px;box-shadow:inset 0 1px 2px rgba(0,0,0,0.35);"></div>
<div class="t" style="left:60.47px;top:988.01px;font-size:13.69px;line-height:13.69px;font-weight:bold;-webkit-text-stroke:0;color:#353535;">White</div>
<div class="a" style="left:159.30px;top:928.80px;width:155.30px;height:81.20px;background:linear-gradient(#a8a8a8,#9a9a9a 40%,#858585 68%,#626262);border-radius:5px;"></div>
<div class="a" style="left:165.30px;top:934.50px;width:143.30px;height:45.80px;background:#c00000;border-radius:5px;box-shadow:inset 0 1px 2px rgba(0,0,0,0.35);"></div>
<div class="t" style="left:223.97px;top:988.01px;font-size:13.69px;line-height:13.69px;font-weight:bold;-webkit-text-stroke:0;color:#353535;">Red</div>
<div class="a" style="left:317.10px;top:928.80px;width:155.30px;height:81.20px;background:linear-gradient(#a8a8a8,#9a9a9a 40%,#858585 68%,#626262);border-radius:5px;"></div>
<div class="a" style="left:323.10px;top:934.50px;width:143.30px;height:45.80px;background:#00c000;border-radius:5px;box-shadow:inset 0 1px 2px rgba(0,0,0,0.35);"></div>
<div class="t" style="left:374.92px;top:988.01px;font-size:13.69px;line-height:13.69px;font-weight:bold;-webkit-text-stroke:0;color:#353535;">Green</div>
<div class="a" style="left:474.90px;top:928.80px;width:155.30px;height:81.20px;background:linear-gradient(#a8a8a8,#9a9a9a 40%,#858585 68%,#626262);border-radius:5px;"></div>
<div class="a" style="left:480.90px;top:934.50px;width:143.30px;height:45.80px;background:#0000c0;border-radius:5px;box-shadow:inset 0 1px 2px rgba(0,0,0,0.35);"></div>
<div class="t" style="left:537.67px;top:988.01px;font-size:13.69px;line-height:13.69px;font-weight:bold;-webkit-text-stroke:0;color:#353535;">Blue</div>
<div class="a" style="left:632.70px;top:928.80px;width:155.30px;height:81.20px;background:linear-gradient(#a8a8a8,#9a9a9a 40%,#858585 68%,#626262);border-radius:5px;"></div>
<div class="a" style="left:638.70px;top:934.50px;width:143.30px;height:45.80px;background:#00c0c0;border-radius:5px;box-shadow:inset 0 1px 2px rgba(0,0,0,0.35);"></div>
<div class="t" style="left:693.57px;top:988.01px;font-size:13.69px;line-height:13.69px;font-weight:bold;-webkit-text-stroke:0;color:#353535;">Cyan</div>
<div class="a" style="left:790.50px;top:928.80px;width:155.30px;height:81.20px;background:linear-gradient(#a8a8a8,#9a9a9a 40%,#858585 68%,#626262);border-radius:5px;"></div>
<div class="a" style="left:796.50px;top:934.50px;width:143.30px;height:45.80px;background:#c000c0;border-radius:5px;box-shadow:inset 0 1px 2px rgba(0,0,0,0.35);"></div>
<div class="t" style="left:840.34px;top:988.01px;font-size:13.69px;line-height:13.69px;font-weight:bold;-webkit-text-stroke:0;color:#353535;">Magenta</div>
<div class="a" style="left:948.30px;top:928.80px;width:155.30px;height:81.20px;background:linear-gradient(#a8a8a8,#9a9a9a 40%,#858585 68%,#626262);border-radius:5px;"></div>
<div class="a" style="left:954.30px;top:934.50px;width:143.30px;height:45.80px;background:#c0c000;border-radius:5px;box-shadow:inset 0 1px 2px rgba(0,0,0,0.35);"></div>
<div class="t" style="left:1004.60px;top:988.01px;font-size:13.69px;line-height:13.69px;font-weight:bold;-webkit-text-stroke:0;color:#353535;">Yellow</div>
<div class="a" style="left:1106.10px;top:928.80px;width:155.30px;height:81.20px;background:linear-gradient(#1c1c1c,#2a2a2a 15%,#303030);border-radius:5px;"></div>
<div class="a" style="left:1112.60px;top:934.30px;width:143.00px;height:45.50px;background:#fff;border-radius:5px;"></div>
<div class="t" style="left:1165.82px;top:988.01px;font-size:13.69px;line-height:13.69px;font-weight:bold;-webkit-text-stroke:0;color:#ffffff;">100W</div>
<div class="a" style="left:1266.00px;top:928.30px;width:60.00px;height:81.70px;background:linear-gradient(#8a8a8a,#6a6a6a);border-radius:5px;"></div>
<div class="a" style="left:1266.00px;top:928.30px;width:60.00px;height:23.00px;background:linear-gradient(#a0a0a0,#7e7e7e);border-radius:5px 5px 0 0;"></div>
<div class="a" style="left:1266.00px;top:951.30px;width:60.00px;height:1.20px;background:#555;"></div>
<div class="a" style="left:1284.5px;top:929.5px;width:23px;height:23px;border-radius:50%;background:linear-gradient(#6e6e6e,#8a8a8a 60%,#a0a0a0);"></div>
<svg style="left:1284px;top:929px" width="24" height="24"><path d="M6.5 14 L17.5 14 L12 8.5 Z" fill="#333"/></svg>
<div class="a" style="left:1276.40px;top:959.60px;width:39.10px;height:37.90px;background:linear-gradient(#b0b0b0,#9a9a9a);border:3px solid #2a2a2a;border-radius:6px;"></div>
<div class="a" style="left:1287.50px;top:969.50px;width:17.50px;height:17.50px;background:#111;"></div>
<div class="a" style="left:1327.80px;top:928.30px;width:57.20px;height:37.50px;background:linear-gradient(#b4b4b4,#8a8a8a 55%,#6a6a6a);"></div>
<div class="a" style="left:1343.9px;top:934px;width:25px;height:25px;border-radius:50%;background:linear-gradient(#6e6e6e,#8e8e8e 55%,#a8a8a8);"></div>
<div class="a" style="left:1386.00px;top:928.30px;width:55.50px;height:37.50px;background:linear-gradient(#b4b4b4,#8a8a8a 55%,#6a6a6a);"></div>
<div class="a" style="left:1401.2px;top:934px;width:25px;height:25px;border-radius:50%;background:linear-gradient(#6e6e6e,#8e8e8e 55%,#a8a8a8);"></div>
<div class="a" style="left:1442.00px;top:928.30px;width:55.50px;height:37.50px;background:linear-gradient(#858585,#5a5a5a);"></div>
<div class="a" style="left:1457.2px;top:934px;width:25px;height:25px;border-radius:50%;background:linear-gradient(#5a5a5a,#7a7a7a);"></div>
<div class="a" style="left:1499.00px;top:928.30px;width:55.00px;height:37.50px;background:linear-gradient(#b4b4b4,#8a8a8a 55%,#6a6a6a);"></div>
<div class="a" style="left:1514.0px;top:934px;width:25px;height:25px;border-radius:50%;background:linear-gradient(#6e6e6e,#8e8e8e 55%,#a8a8a8);"></div>
<div class="a" style="left:1555.00px;top:928.30px;width:55.00px;height:37.50px;background:linear-gradient(#b4b4b4,#8a8a8a 55%,#6a6a6a);"></div>
<div class="a" style="left:1570.0px;top:934px;width:25px;height:25px;border-radius:50%;background:linear-gradient(#6e6e6e,#8e8e8e 55%,#a8a8a8);"></div>
<div class="a" style="left:1327.80px;top:967.30px;width:169.70px;height:42.70px;background:linear-gradient(#b8b8b8,#9a9a9a 45%,#7a7a7a);"></div>
<div class="a" style="left:1499.00px;top:967.30px;width:154.00px;height:42.70px;background:linear-gradient(#b8b8b8,#9a9a9a 45%,#7a7a7a);"></div>
<div class="a" style="left:1497.50px;top:967.30px;width:1.50px;height:42.70px;background:#5a5a5a;"></div>
<div class="a" style="left:1353.5px;top:973.5px;width:25px;height:25px;border-radius:50%;background:linear-gradient(#7a7a7a,#9a9a9a 55%,#b0b0b0);"></div>
<div class="a" style="left:1619.5px;top:973.5px;width:25px;height:25px;border-radius:50%;background:linear-gradient(#7a7a7a,#9a9a9a 55%,#b0b0b0);"></div>
<svg width="1653" height="1004" style="left:0;top:0"><rect x="1351.3" y="942.3" width="9.6" height="9.6" fill="#2e2e2e"/><path d="M1410 942.3 L1420.6 948.3 L1410 954.3 Z" fill="#2e2e2e"/><path d="M1464.8 941.5 h-2.4 v11.5 h2.4 M1473.2 941.5 h2.4 v11.5 h-2.4" fill="none" stroke="#2e2e2e" stroke-width="2"/><circle cx="1467.3" cy="947.3" r="1.1" fill="#2e2e2e"/><circle cx="1470.7" cy="947.3" r="1.1" fill="#2e2e2e"/><path d="M1526.5 947.3 c-2.5 -4 -7 -4 -7 0 c0 4 4.5 4 7 0 c2.5 -4 7 -4 7 0 c0 4 -4.5 4 -7 0 Z" fill="none" stroke="#2e2e2e" stroke-width="2.2"/><path d="M1576.5 945.8 a6 6 0 0 1 10.5 -2 M1588 948.8 a6 6 0 0 1 -10.5 2" fill="none" stroke="#2e2e2e" stroke-width="2.2"/><path d="M1588.5 939.8 v5.5 h-5.5 Z M1575 954.8 v-5.5 h5.5 Z" fill="#2e2e2e"/><path d="M1366 980.5 L1360.5 986.2 L1366 992 M1371.5 980.5 L1366 986.2 L1371.5 992" fill="none" stroke="#333" stroke-width="1.8"/><path d="M1627 980.5 L1632.5 986.2 L1627 992 M1632.5 980.5 L1638 986.2 L1632.5 992" fill="none" stroke="#333" stroke-width="1.8"/></svg>
<div class="t" style="left:1400.00px;top:973.84px;font-size:26.54px;line-height:26.54px;font-weight:bold;-webkit-text-stroke:0;color:#3a3a3a;transform:scaleX(0.9774);">Back</div>
<div class="t" style="left:1533.40px;top:973.84px;font-size:26.54px;line-height:26.54px;font-weight:bold;-webkit-text-stroke:0;color:#3a3a3a;transform:scaleX(1.1163);">Next</div>
<svg width="1653" height="1004" style="left:0;top:0"><line x1="1638.00" y1="961.50" x2="1638.00" y2="928.50" stroke="#ee0000" stroke-width="6.5"/><line x1="1623.71" y1="953.25" x2="1652.29" y2="936.75" stroke="#ee0000" stroke-width="6.5"/><line x1="1623.71" y1="936.75" x2="1652.29" y2="953.25" stroke="#ee0000" stroke-width="6.5"/></svg>
<script>
(function(){
var L=[[0.17411,0.00496],[0.17401,0.00498],[0.17380,0.00492],[0.17356,0.00492],[0.17334,0.00480],[0.17302,0.00478],[0.17258,0.00480],[0.17209,0.00483],[0.17141,0.00510],[0.17030,0.00579],[0.16888,0.00690],[0.16690,0.00856],[0.16441,0.01086],[0.16110,0.01379],[0.15664,0.01770],[0.15099,0.02274],[0.14396,0.02970],[0.13550,0.03988],[0.12412,0.05780],[0.10959,0.08684],[0.09129,0.13270],[0.06871,0.20072],[0.04539,0.29498],[0.02346,0.41270],[0.00817,0.53842],[0.00386,0.65482],[0.01387,0.75019],[0.03885,0.81202],[0.07430,0.83380],[0.11416,0.82621],[0.15472,0.80586],[0.19288,0.78163],[0.22962,0.75433],[0.26578,0.72432],[0.30160,0.69231],[0.33736,0.65885],[0.37310,0.62445],[0.40874,0.58961],[0.44406,0.55471],[0.47877,0.52020],[0.51249,0.48659],[0.54479,0.45443],[0.57515,0.42423],[0.60293,0.39650],[0.62704,0.37249],[0.64823,0.35139],[0.66576,0.33401],[0.68008,0.31975],[0.69150,0.30834],[0.70061,0.29930],[0.70792,0.29203],[0.71403,0.28593],[0.71903,0.28093],[0.72303,0.27695],[0.72599,0.27401],[0.72827,0.27173],[0.72997,0.27003],[0.73199,0.26801],[0.73342,0.26658],[0.73439,0.26561],[0.73469,0.26531]];
function rgb(X,Y,Z){
 return [3.2406*X-1.5372*Y-0.4986*Z, -0.9689*X+1.8758*Y+0.0415*Z, 0.0557*X-0.2040*Y+1.0570*Z];
}
// CIE 1976
var cv=document.getElementById('c76'); var ctx=cv.getContext('2d');
var W=cv.width,H=cv.height, OX=1018, OY=119;
var PX0=1018.7, PY0=609.9, SU=1064, SV=820.3;
var off=document.createElement('canvas'); off.width=W; off.height=H;
var oc=off.getContext('2d'); var im=oc.createImageData(W,H); var d=im.data;
var SS=[0.25,0.75];
for(var j=0;j<H;j++){ for(var i=0;i<W;i++){
  var ar=0,ag=0,ab=0;
  for(var sj=0;sj<2;sj++){ for(var si=0;si<2;si++){
  var u=(OX+i+SS[si]-PX0)/SU, v=(PY0-(OY+j+SS[sj]))/SV; if(v<0.001)v=0.001;
  var den=6*u-16*v+12; var x=9*u/den, y=4*v/den;
  var c=rgb(x/y,1,(1-x-y)/y);
  var inside=(c[0]>=0&&c[1]>=0&&c[2]>=0);
  var r=Math.max(c[0],0), g=Math.max(c[1],0), b=Math.max(c[2],0);
  var m=Math.max(r,g,b)||1; var k=inside?255:150;
  ar+=r/m*k; ag+=g/m*k; ab+=b/m*k; }}
  var p=(j*W+i)*4; d[p]=ar/4; d[p+1]=ag/4; d[p+2]=ab/4; d[p+3]=255;
}}
oc.putImageData(im,0,0);
var PP=[];
for(var n=0;n<L.length;n++){ var xx=L[n][0], yy=L[n][1]; var dd=-2*xx+12*yy+3; var uu=4*xx/dd, vv=9*yy/dd;
  PP.push([PX0+uu*SU-OX, PY0-vv*SV-OY]); }
ctx.beginPath(); ctx.moveTo(PP[0][0],PP[0][1]);
for(var n=0;n<PP.length-1;n++){
  var p0=PP[Math.max(n-1,0)], p1=PP[n], p2=PP[n+1], p3=PP[Math.min(n+2,PP.length-1)];
  for(var t=1;t<=8;t++){ var tt=t/8, t2=tt*tt, t3=t2*tt;
    var qx=0.5*((2*p1[0])+(-p0[0]+p2[0])*tt+(2*p0[0]-5*p1[0]+4*p2[0]-p3[0])*t2+(-p0[0]+3*p1[0]-3*p2[0]+p3[0])*t3);
    var qy=0.5*((2*p1[1])+(-p0[1]+p2[1])*tt+(2*p0[1]-5*p1[1]+4*p2[1]-p3[1])*t2+(-p0[1]+3*p1[1]-3*p2[1]+p3[1])*t3);
    ctx.lineTo(qx,qy); }
}
ctx.closePath(); ctx.clip(); ctx.drawImage(off,0,0);
var fb=document.getElementById('fb76'); if(fb) fb.style.display='none';
// CIE 1931 zoom
var c2=document.getElementById('c31'); var x2=c2.getContext('2d');
var W2=c2.width,H2=c2.height; var im2=x2.createImageData(W2,H2); var d2=im2.data;
var KX=1/6400, KY=1/4150;
for(var j=0;j<H2;j++){ for(var i=0;i<W2;i++){
  var x=0.3127+(638.5+i+0.5-807)*KX, y=0.329-(677.5+j+0.5-774)*KY;
  var c=rgb(x/y,1,(1-x-y)/y);
  var r=Math.max(c[0],0), g=Math.max(c[1],0), b=Math.max(c[2],0); var m=Math.max(r,g,b)||1;
  var p=(j*W2+i)*4; d2[p]=r/m*255; d2[p+1]=g/m*255; d2[p+2]=b/m*255; d2[p+3]=255;
}}
x2.putImageData(im2,0,0);
})();
</script>
</body></html>
